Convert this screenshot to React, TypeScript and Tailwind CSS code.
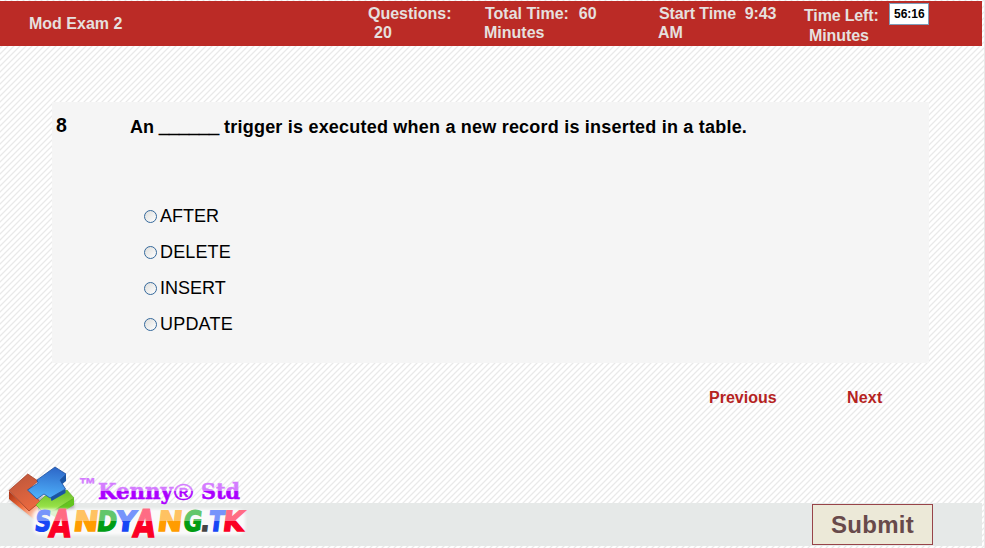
import React from 'react';

const options = [
  { label: 'AFTER', tracking: 'tracking-normal' },
  { label: 'DELETE', tracking: 'tracking-[0.15px]' },
  { label: 'INSERT', tracking: 'tracking-normal' },
  { label: 'UPDATE', tracking: 'tracking-[0.2px]' },
];

const letters = [
  { c: 'S', x: 34, w: 16, f: 'blue' },
  { c: 'A', x: 48, w: 22, f: 'red', big: true },
  { c: 'N', x: 72.5, w: 25, f: 'orange' },
  { c: 'D', x: 96, w: 20, f: 'green' },
  { c: 'Y', x: 115, w: 20, f: 'blue' },
  { c: 'A', x: 132, w: 22, f: 'red', big: true },
  { c: 'N', x: 156.5, w: 25, f: 'orange' },
  { c: 'G', x: 182.5, w: 18.5, f: 'green' },
  { c: '.', x: 200, w: 9, f: 'gray' },
  { c: 'T', x: 208, w: 15, f: 'blue' },
  { c: 'K', x: 222, w: 21, f: 'red' },
];

const fills: Record<string, [string, string]> = {
  blue: ['#7694fb', '#1746f5'],
  red: ['#ff6c84', '#fb0024'],
  orange: ['#ffc262', '#ff9c00'],
  green: ['#63c66b', '#009c14'],
  gray: ['#888888', '#444444'],
};

function Logo() {
  return (
    <svg width="260" height="93" viewBox="0 455 260 93" className="block">
      <defs>
        {Object.entries(fills).map(([k, [a, b]]) => (
          <React.Fragment key={k}>
            <linearGradient id={k} gradientUnits="userSpaceOnUse" x1="0" y1="-22" x2="0" y2="2">
              <stop offset=".52" stopColor={a} />
              <stop offset=".52" stopColor={b} />
            </linearGradient>
            <linearGradient id={`${k}-big`} gradientUnits="userSpaceOnUse" x1="0" y1="-28" x2="0" y2="-4">
              <stop offset=".52" stopColor={a} />
              <stop offset=".52" stopColor={b} />
            </linearGradient>
          </React.Fragment>
        ))}
        <linearGradient id="purple" gradientUnits="userSpaceOnUse" x1="0" y1="482" x2="0" y2="503">
          <stop offset=".44" stopColor="#d47bff" />
          <stop offset=".44" stopColor="#aa00ff" />
        </linearGradient>
        <linearGradient id="orangeFace" x1="0" y1="0" x2=".4" y2="1">
          <stop offset="0" stopColor="#b8553b" />
          <stop offset="1" stopColor="#e8683f" />
        </linearGradient>
        <linearGradient id="orangeSide" x1="0" y1="0" x2="1" y2="1">
          <stop offset="0" stopColor="#a92e10" />
          <stop offset=".5" stopColor="#f2703f" />
          <stop offset="1" stopColor="#fff0e5" />
        </linearGradient>
        <linearGradient id="blueFace" x1=".6" y1="0" x2=".5" y2="1">
          <stop offset="0" stopColor="#2d67c8" />
          <stop offset="1" stopColor="#4fb2fb" />
        </linearGradient>
        <linearGradient id="greenFace" x1="0" y1="0" x2="0" y2="1">
          <stop offset="0" stopColor="#69bd26" />
          <stop offset="1" stopColor="#a9ef55" />
        </linearGradient>
        <filter id="glow" x="-20%" y="-50%" width="140%" height="200%">
          <feGaussianBlur stdDeviation="1.8" />
        </filter>
      </defs>
      <path d="M10 493v8l26 18 38-10v-9z" fill="#555" opacity=".4" filter="url(#glow)" />
      <path d="M9 491 25 507 38 498v14l-3 8L9 499z" fill="url(#orangeSide)" />
      <path d="M9 490.5 27.7 474 38 481l-10 9 9 8 3 4-11 9z" fill="url(#orangeFace)" stroke="#9d351d" strokeWidth=".7" />
      <path d="M37 506 55 517l19-12v-7l-17 6-12 3z" fill="#63c41e" />
      <path d="M36 505 45 496 67 490l7 8-19 12-11 3z" fill="url(#greenFace)" stroke="#58aa22" strokeWidth=".6" />
      <path d="M66 474v7l-5 4-1-5zM65.500 489v4l-14 8-1-4z" fill="#1955a5" />
      <path d="M27.500 490 38 483l-1-3 18-13 11 7-6 6 5.500 9L50 498l-6-4-7 5z" fill="url(#blueFace)" stroke="#1e4f9d" strokeWidth=".8" />
      <rect x="33" y="509" width="212" height="26" rx="7" fill="white" opacity=".8" filter="url(#glow)" />
      <text x="79" y="490" fontFamily="Liberation Sans, sans-serif" fontWeight="700" fontSize="17" fill="#d47bff" stroke="#d47bff" strokeWidth=".4" textLength="17" lengthAdjust="spacingAndGlyphs">™</text>
      <g fill="url(#purple)" stroke="url(#purple)" strokeWidth=".5" fontFamily="DejaVu Serif, serif" fontWeight="700" fontSize="21.5">
        <text x="98" y="499" textLength="75" lengthAdjust="spacingAndGlyphs">Kenny</text>
        <text x="174" y="499.500" fontSize="22" fontWeight="400" textLength="19" lengthAdjust="spacingAndGlyphs" fontFamily="Liberation Sans, sans-serif">®</text>
        <text x="201" y="499" textLength="39" lengthAdjust="spacingAndGlyphs">Std</text>
      </g>
      <g fontFamily="DejaVu Sans, sans-serif" fontWeight="700">
        {letters.map((l, i) => (
          <text
            key={i}
            transform={`translate(${l.x} ${l.big ? 537 : 531}) skewX(-7)`}
            fontSize={l.big ? 38 : 28}
            textLength={l.w}
            lengthAdjust="spacingAndGlyphs"
            fill={l.big ? `url(#${l.f}-big)` : `url(#${l.f})`}
            stroke={l.big ? `url(#${l.f}-big)` : `url(#${l.f})`}
            strokeWidth="1.4"
          >
            {l.c}
          </text>
        ))}
      </g>
    </svg>
  );
}

export default function App() {
  return (
    <div className="relative flex h-[548px] w-[985px] flex-col overflow-hidden bg-[repeating-linear-gradient(135deg,#e9e9e9_0px,#ffffff_1.2px,#ffffff_3.04px,#e9e9e9_4.2426px)] pt-px font-['Liberation_Sans',Arial,sans-serif]">
      <header className="flex h-[45px] w-[982px] shrink-0 bg-[#bb2b26] text-[16px] leading-[19px] font-bold whitespace-pre text-[#e6e0df]">
        <div className="w-[368px] pt-[13px] pl-[29px]">Mod Exam 2</div>
        <div className="w-[116px] pt-[3px]"><div>Questions:</div><div className="pl-[6px]">20</div></div>
        <div className="w-[174px] pt-[3px]"><div className="pl-px">Total Time:  <span className="pl-px">60</span></div><div>Minutes</div></div>
        <div className="w-[146px] pt-[3px]"><div className="pl-px tracking-[-0.1px]">Start Time  9:43</div><div>AM</div></div>
        <div className="w-[85px] pt-[5px] leading-[20px]"><div className="tracking-[-0.15px]">Time Left:</div><div className="pl-[5px] tracking-[-0.1px]">Minutes</div></div>
        <div className="mt-[2px] h-[22px] w-[40px] border border-[#7f9db9] bg-white pl-[4px] text-[12px] leading-[21px] text-black">56:16</div>
      </header>
      <main className="mt-[56px] ml-[52px] h-[261px] w-[877px] shrink-0 bg-[#f5f5f5] text-black">
        <div className="flex pt-[14px] text-[18px] leading-[20px] font-bold">
          <div className="-mt-px w-[78px] pl-[4px] text-[19.5px]">8</div>
          <div className="pt-px whitespace-nowrap">An <span className="[-webkit-text-stroke:0.6px_black]">______</span> <span className="tracking-[0.21px]">trigger is executed when a new record is inserted in a table.</span></div>
        </div>
        <div className="mt-[61px] ml-[92px] flex flex-col">
          {options.map((o) => (
            <label key={o.label} className={`flex h-[36px] items-center text-[18px] ${o.tracking}`}>
              <span className="mt-px mr-[3px] h-[13px] w-[13px] rounded-full border border-[#34689b] bg-gradient-to-br from-[#dededb] to-white" />
              {o.label}
            </label>
          ))}
        </div>
      </main>
      <nav className="mt-[25px] flex h-[20px] shrink-0 pl-[709px] text-[16px] leading-[20px] font-bold text-[#b5231f]">
        <a className="w-[138px]">Previous</a>
        <a className="tracking-[0.2px]">Next</a>
      </nav>
      <footer className="mt-[95px] flex h-[43px] w-[982px] shrink-0 bg-[#e6e9e8] pl-[812px]">
        <button className="mt-px h-[41px] w-[121px] border border-[#984449] bg-[#ece9d8] text-[24px] font-bold tracking-[0.3px] text-[#684a4b]">Submit</button>
      </footer>
      <div className="absolute top-[455px] left-0"><Logo /></div>
      <div className="absolute top-0 right-0 h-full w-px bg-[#e8e8e8]" />
    </div>
  );
}
